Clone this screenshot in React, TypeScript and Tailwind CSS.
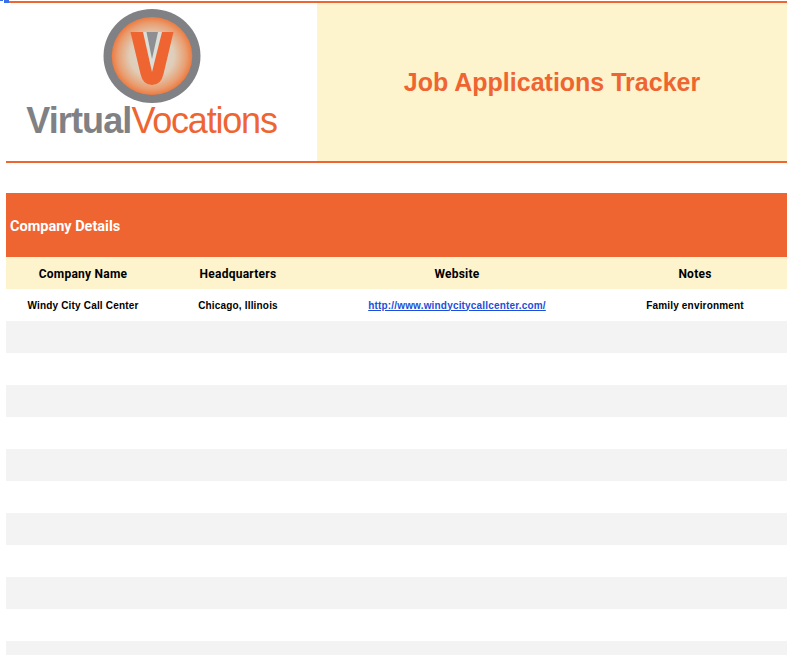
export default function App() {
  const rows = Array.from({ length: 11 }, (_, i) => i);
  return (
    <div className="relative h-[655px] w-[787px] overflow-hidden bg-white pl-[6px] font-['Liberation_Sans',sans-serif]">
      <div className="absolute left-0 top-0 h-px w-[3px] bg-[#3b6ee8]" />
      <div className="absolute left-[4px] top-0 h-[3px] w-[5px] bg-[#3b6ee8]" />
      <div className="h-[1px]" />
      <div className="ml-[3px] h-[2px] bg-[#ee6531]" />
      <div className="flex h-[160px] border-b-2 border-[#ee6531]">
        <div className="flex w-[311px] flex-col items-center pr-[20px]">
          <svg width="100" height="100" viewBox="0 0 100 100" className="mt-[3px] shrink-0">
            <defs>
              <radialGradient id="g" cx="50%" cy="50%" r="50%">
                <stop offset="0%" stopColor="#dcdcd6" />
                <stop offset="55%" stopColor="#e0cdb8" />
                <stop offset="85%" stopColor="#e99d70" />
                <stop offset="100%" stopColor="#ee7a40" />
              </radialGradient>
            </defs>
            <ellipse cx="50" cy="50" rx="48.5" ry="47" fill="#808184" />
            <ellipse cx="50" cy="50" rx="40.3" ry="39" fill="url(#g)" />
            <path d="M28.5 26 L71.5 26 L61.5 68 Q59 79 50 79 Q41 79 38.5 68 Z" fill="#ee6531" />
            <path d="M41 26 L60 26 L50 66 Z" fill="#dcded8" />
            <path d="M44.5 26 L56 26 L50 53 Z" fill="#8e8f92" />
          </svg>
          <div className="-mt-[4px] flex h-[38px] items-center whitespace-nowrap text-[36px] leading-[38px]">
            <span className="font-bold tracking-[-0.9px] text-[#808184]">Virtual</span>
            <span className="font-normal tracking-[-1.2px] text-[#ee6531]">Vocations</span>
          </div>
        </div>
        <div className="flex flex-1 items-center justify-center bg-[#fdf3cd] pt-[2px]">
          <h1 className="text-[25px] font-bold text-[#ee6531]">Job Applications Tracker</h1>
        </div>
      </div>
      <div className="mt-[30px] flex h-16 items-center bg-[#ee6531] pl-[4px] pt-[3px] font-['Roboto',sans-serif] text-[14.5px] font-bold text-white">
        Company Details
      </div>
      <div className="grid h-8 grid-cols-[154px_156px_282px_189px] items-center bg-[#fdf3cd] pt-[2px] text-center font-['Roboto',sans-serif] text-[12px] font-bold tracking-[0.25px] text-black">
        <div>Company Name</div>
        <div>Headquarters</div>
        <div>Website</div>
        <div className="pl-[5px]">Notes</div>
      </div>
      <div className="grid h-8 grid-cols-[154px_156px_282px_189px] items-center text-center text-[10px] font-bold tracking-[0.18px] text-black">
        <div>Windy City Call Center</div>
        <div>Chicago, Illinois</div>
        <a className="text-[#1d4ed8] underline" href="#">http://www.windycitycallcenter.com/</a>
        <div className="pl-[5px]">Family environment</div>
      </div>
      {rows.map((i) => (
        <div key={i} className={i % 2 === 0 ? "h-8 bg-[#f3f3f3]" : "h-8 bg-white"} />
      ))}
    </div>
  );
}
